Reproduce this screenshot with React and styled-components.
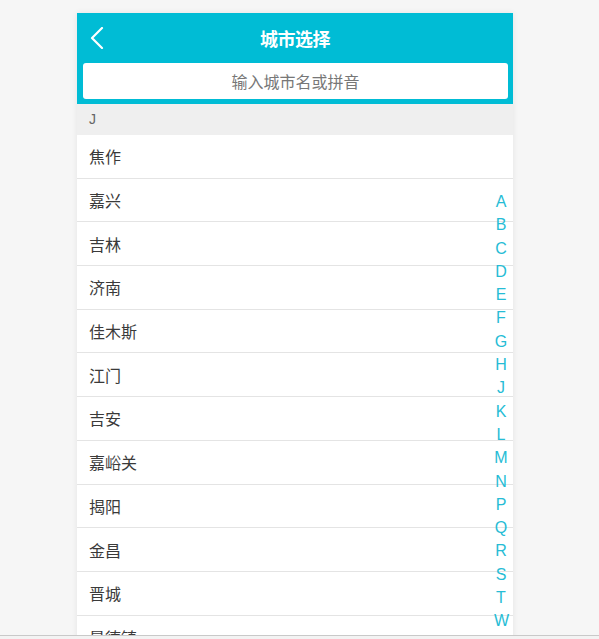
import React from 'react'
import styled, { createGlobalStyle } from 'styled-components'

const GlobalStyle = createGlobalStyle`
  html, body {
    margin: 0;
    padding: 0;
    background: #f6f6f6;
    font-family: "Liberation Sans", "Noto Sans CJK SC", sans-serif;
  }
`

const Page = styled.div`
  padding-top: 13px;
  padding-left: 77px;
`

const Panel = styled.div`
  position: relative;
  width: 436px;
  background: #fff;
  box-shadow: 0 0 6px rgba(0, 0, 0, 0.08);
`

const Header = styled.header`
  position: relative;
  height: 50px;
  background: #00bcd5;
  display: flex;
  align-items: center;
  justify-content: center;
`

const BackButton = styled.button`
  position: absolute;
  left: 10px;
  top: 13px;
  width: 20px;
  height: 24px;
  padding: 0;
  border: none;
  background: transparent;
  display: flex;
  align-items: center;
  justify-content: center;
`

const Title = styled.h1`
  margin: 0;
  color: #fff;
  font-size: 18px;
  font-weight: bold;
  font-family: "Noto Sans CJK SC", sans-serif;
  letter-spacing: -0.5px;
`

const SearchBar = styled.div`
  background: #00bcd5;
  padding: 0 5px 5px 6px;
`

const SearchInput = styled.input`
  display: block;
  box-sizing: border-box;
  width: 100%;
  height: 36px;
  border: none;
  border-radius: 3px;
  background: #fff;
  text-align: center;
  font-size: 16px;
  font-family: "Noto Sans CJK SC", sans-serif;
  color: #333;
  outline: none;
  &::placeholder {
    color: #777;
  }
`

const GroupTitle = styled.div`
  height: 31px;
  line-height: 31px;
  padding-left: 12px;
  background: #efefef;
  color: #666;
  font-size: 14px;
`

const CityList = styled.ul`
  margin: 0;
  padding: 0;
  list-style: none;
`

const CityItem = styled.li`
  box-sizing: border-box;
  height: 43.7px;
  padding-left: 12px;
  display: flex;
  align-items: center;
  border-bottom: 1px solid #e4e4e4;
  color: #3a3a3a;
  font-size: 16px;
  font-family: "Noto Sans CJK SC", sans-serif;
`

const IndexBar = styled.ul`
  position: absolute;
  right: 5px;
  top: 177px;
  margin: 0;
  padding: 0;
  list-style: none;
  width: 14px;
`

const IndexLetter = styled.li`
  height: 23.3px;
  line-height: 23.3px;
  text-align: center;
  font-size: 16px;
  color: #26bcd5;
`

const BottomEdge = styled.div`
  position: fixed;
  left: 0;
  right: 0;
  bottom: 0;
  height: 3px;
  border-top: 1px solid #c9c9c9;
  background: #f3f3f3;
`

const cities = [
  '焦作', '嘉兴', '吉林', '济南', '佳木斯', '江门', '吉安',
  '嘉峪关', '揭阳', '金昌', '晋城', '景德镇', '九江', '荆州',
]

const letters = 'ABCDEFGHJKLMNPQRSTWXYZ'.split('')

const BackIcon = () => (
  <svg width="14" height="22" viewBox="0 0 14 22">
    <path d="M12 1 L2 11 L12 21" fill="none" stroke="#fff" strokeWidth="2.2" strokeLinecap="round" strokeLinejoin="round" />
  </svg>
)

export default function App() {
  return (
    <>
      <GlobalStyle />
      <Page>
        <Panel>
          <Header>
            <BackButton aria-label="返回">
              <BackIcon />
            </BackButton>
            <Title>城市选择</Title>
          </Header>
          <SearchBar>
            <SearchInput placeholder="输入城市名或拼音" />
          </SearchBar>
          <GroupTitle>J</GroupTitle>
          <CityList>
            {cities.map(city => (
              <CityItem key={city}>{city}</CityItem>
            ))}
          </CityList>
          <IndexBar>
            {letters.map(l => (
              <IndexLetter key={l}>{l}</IndexLetter>
            ))}
          </IndexBar>
        </Panel>
      </Page>
      <BottomEdge />
    </>
  )
}
